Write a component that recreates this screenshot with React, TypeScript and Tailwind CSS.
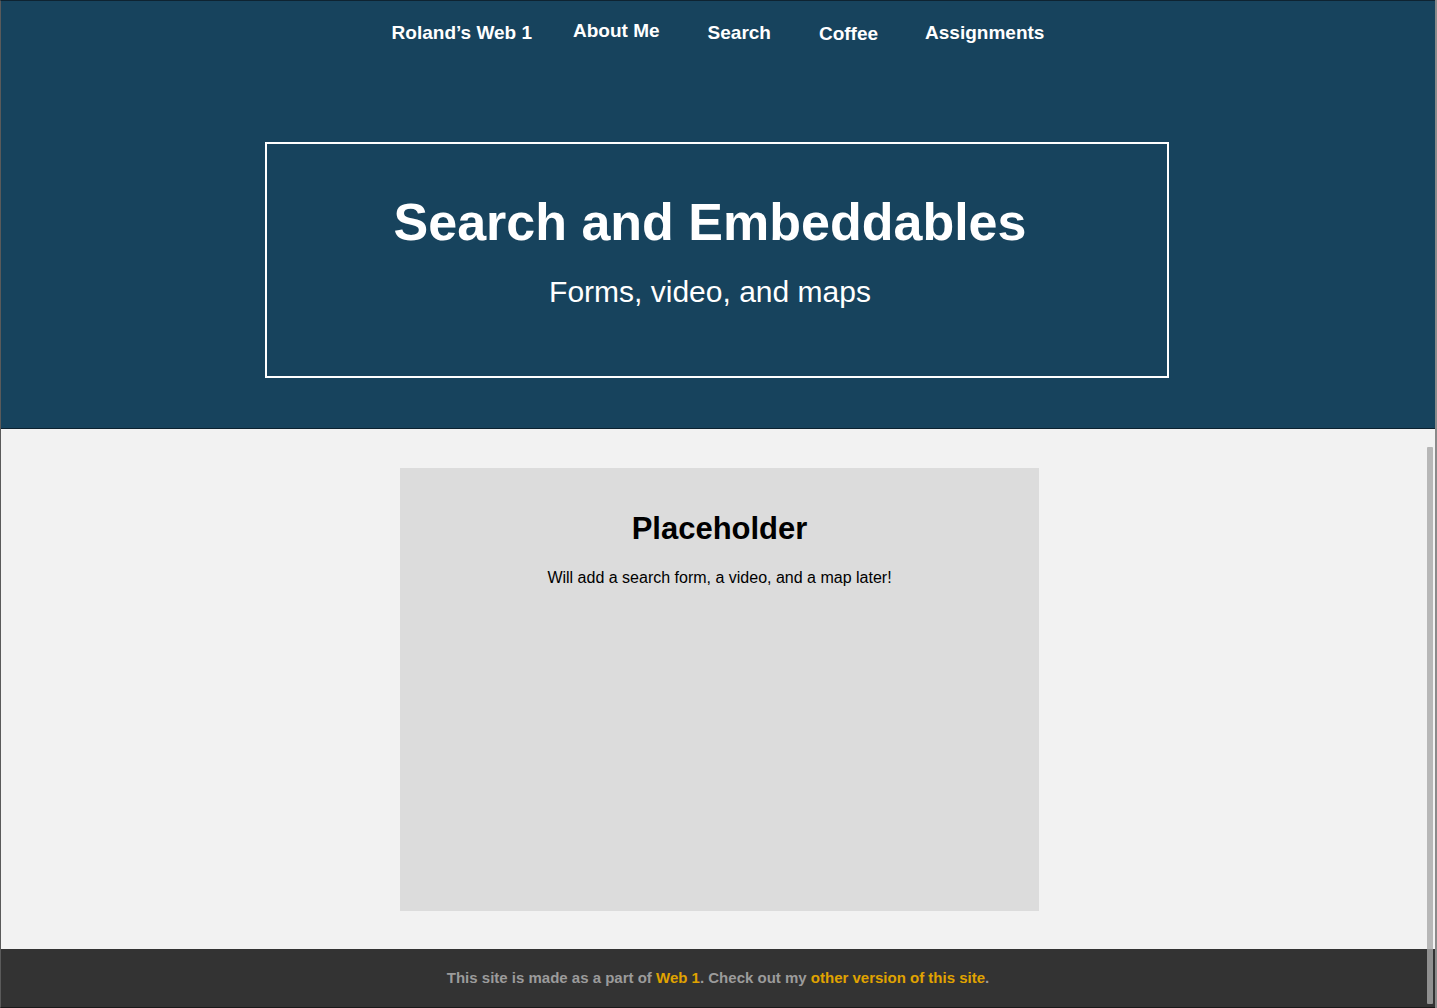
import React from "react";

export default function App() {
  const font = { fontFamily: '"Liberation Sans", Arial, sans-serif' };
  return (
    <div className="relative w-[1437px] h-[1008px] flex overflow-hidden bg-[#f2f2f2]" style={font}>
      <div className="flex-1 flex flex-col border-l border-l-[#5a5a5a] border-t border-t-[#0e2331] border-b border-b-[#1a1a1a]">
        <header className="h-[428px] bg-[#17435d] border-b border-b-[#0c2230] flex flex-col items-center">
          <nav className="flex items-start justify-center text-white font-bold text-[19px] leading-none pl-[0px]">
            <a className="pt-[22px] mr-[41px]">Roland’s Web 1</a>
            <a className="pt-[20px] mr-[48px]">About Me</a>
            <a className="pt-[22px] mr-[48px]">Search</a>
            <a className="pt-[23px] mr-[47px]">Coffee</a>
            <a className="pt-[22px]">Assignments</a>
          </nav>
          <div className="mt-[99px] w-[904px] h-[236px] border-2 border-white flex flex-col items-center pr-[13px] ml-[-3px]">
            <h1 className="mt-[52px] text-[52px] font-bold text-white leading-none">Search and Embeddables</h1>
            <p className="mt-[29px] text-[30px] text-white leading-none">Forms, video, and maps</p>
          </div>
        </header>
        <main className="flex-1 flex justify-center pt-[39px] pl-[3px]">
          <div className="w-[639px] h-[443px] bg-[#dcdcdc] flex flex-col items-center">
            <h2 className="mt-[45px] text-[31px] font-bold text-black leading-none">Placeholder</h2>
            <p className="mt-[26px] text-[16px] text-black leading-none">Will add a search form, a video, and a map later!</p>
          </div>
        </main>
        <footer className="h-[58px] bg-[#333333] flex items-center justify-center text-[15px] font-bold text-[#9b9b9b]">
          <p className="mt-[1px]">
            This site is made as a part of <a className="text-[#e0a300]">Web 1</a>. Check out my{" "}
            <a className="text-[#e0a300]">other version of this site</a>.
          </p>
        </footer>
      </div>
      <div className="w-[2px] h-full bg-[#8a8a8a]" />
      <div className="absolute left-[1427px] top-[447px] w-[6px] h-[557px] bg-[#a8a8a8] opacity-80 rounded-[1px]" />
    </div>
  );
}
